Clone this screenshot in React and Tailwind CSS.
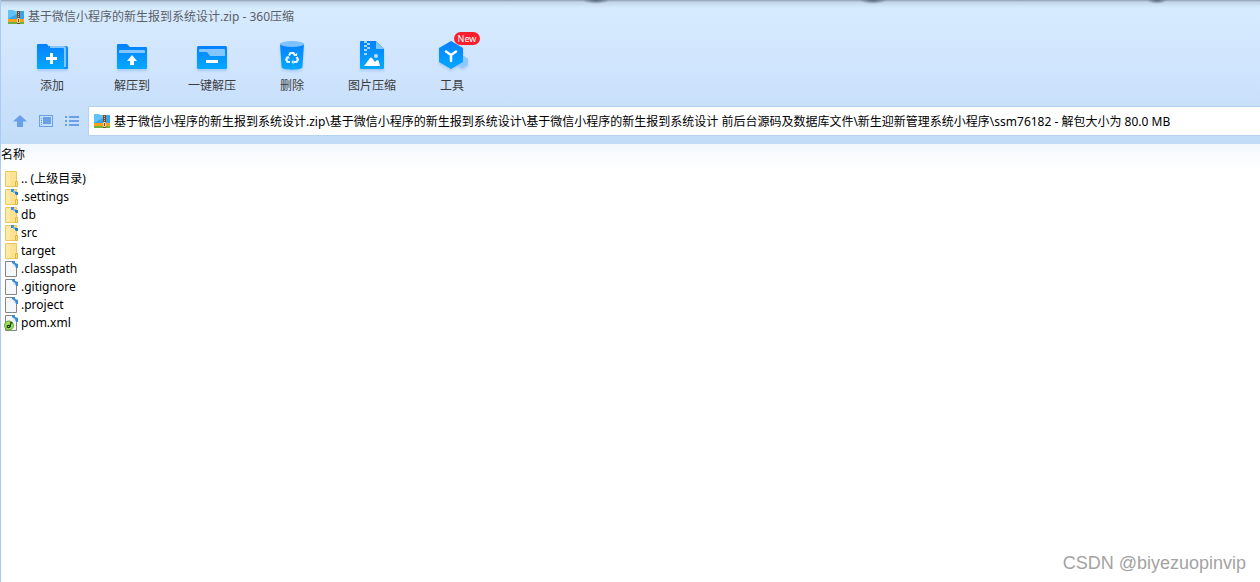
import React, { useState } from 'react';

const ADDRESS = '基于微信小程序的新生报到系统设计.zip\\基于微信小程序的新生报到系统设计\\基于微信小程序的新生报到系统设计 前后台源码及数据库文件\\新生迎新管理系统小程序\\ssm76182 - 解包大小为 80.0 MB';

const files = [
    { name: '.. (上级目录)', type: 'folder' },
    { name: '.settings', type: 'folder', packed: true },
    { name: 'db', type: 'folder', packed: true },
    { name: 'src', type: 'folder', packed: true },
    { name: 'target', type: 'folder' },
    { name: '.classpath', type: 'file', packed: true },
    { name: '.gitignore', type: 'file', packed: true },
    { name: '.project', type: 'file', packed: true },
    { name: 'pom.xml', type: 'xml', packed: true },
];

const ToolSvg = ({ children }) => (
    <svg viewBox="0 0 32 32" className="h-8 w-8 overflow-visible drop-shadow-[0_2px_1px_rgba(60,130,220,0.25)]" aria-hidden="true">
        {children}
    </svg>
);

const AddIcon = () => (
    <ToolSvg>
        <path d="M13 6h17a2 2 0 0 1 2 2v20a1 1 0 0 1-1 1H13z" fill="#0a8dff" />
        <path d="M14 6h14a2 2 0 0 1 2 2v19h-2V9H14z" fill="#86c6ff" />
        <path d="M2 4h9l3 4h13a1 1 0 0 1 1 1v20H2a1 1 0 0 1-1-1V5a1 1 0 0 1 1-1z" fill="url(#toolBlue)" />
        <path d="M14 13h3v4h4v3h-4v4h-3v-4h-4v-3h4z" fill="#fff" />
    </ToolSvg>
);

const ExtractIcon = () => (
    <ToolSvg>
        <path d="M2 4h9l3 3h16a1 1 0 0 1 1 1v20a1 1 0 0 1-1 1H2a1 1 0 0 1-1-1V5a1 1 0 0 1 1-1z" fill="url(#toolBlue)" />
        <path d="M4 10h24a1 1 0 0 1 1 1v2H3v-2a1 1 0 0 1 1-1z" fill="#86c6ff" />
        <path d="M16 15l5 6h-3v4h-4v-4h-3z" fill="#fff" />
    </ToolSvg>
);

const OneClickIcon = () => (
    <ToolSvg>
        <rect x="1" y="6" width="30" height="23" rx="1.5" fill="url(#toolBlue)" />
        <path d="M4 9h24a1 1 0 0 1 1 1v6H14l-3-4H3v-2a1 1 0 0 1 1-1z" fill="#86c6ff" />
        <rect x="10" y="20" width="12" height="3" rx="0.5" fill="#fff" />
    </ToolSvg>
);

const DeleteIcon = () => (
    <ToolSvg>
        <path d="M4 4h24l-1.600 23c-.2 3.500-20.600 3.500-20.800 0z" fill="url(#toolBlue)" />
        <ellipse cx="16" cy="4" rx="12" ry="3" fill="#7dc1ff" />
        <g fill="none" stroke="#e8f5ff" strokeWidth="2.200">
            <path d="M13 15.500l1.500-2.500h3l1.500 2.500" />
            <path d="M20.500 17l1.500 2.500-1.500 2.500h-3" />
            <path d="M14 22h-2.500l-1.300-2.500 1.500-2.500" />
        </g>
        <path d="M17.500 15.800l3.500.2.300-3.200zM17.500 19.800v4.400l-2.200-2.200zM9.500 17.300l3-1.300 1.300 3z" fill="#e8f5ff" />
    </ToolSvg>
);

const ImageIcon = () => (
    <ToolSvg>
        <path d="M5 1h15l8 8v19a1 1 0 0 1-1 1H5a1 1 0 0 1-1-1V2a1 1 0 0 1 1-1z" fill="url(#toolBlue)" />
        <path d="M20 1l8 8h-7a1 1 0 0 1-1-1z" fill="#86c6ff" />
        <path d="M8 1h3v2H8zM11 3h3v2h-3zM8 5h3v2H8zM11 7h3v2h-3zM8 9h3v2H8zM8 13h3v2H8z" fill="#a5d5ff" />
        <circle cx="20" cy="16" r="2" fill="#b9deff" />
        <path d="M8 26l6-8q1-1 2 0l3 4 1.500-1.500q1-.8 2 0L24 26z" fill="#fff" />
    </ToolSvg>
);

const ToolsIcon = () => (
    <ToolSvg>
        <path d="M27 15.500l5 3v6l-5 3.500-5-2z" fill="#8ec8ff" />
        <path d="M15 1l12 7v14l-12 7-12-7V8z" fill="url(#toolBlue)" />
        <path d="M10 11.500l5 3.500 5-3.500M15 15v6" fill="none" stroke="#fff" strokeWidth="2.500" strokeLinecap="round" strokeLinejoin="round" />
    </ToolSvg>
);

const tools = [
    { label: '添加', Icon: AddIcon },
    { label: '解压到', Icon: ExtractIcon },
    { label: '一键解压', Icon: OneClickIcon },
    { label: '删除', Icon: DeleteIcon },
    { label: '图片压缩', Icon: ImageIcon },
    { label: '工具', Icon: ToolsIcon, badge: 'New' },
];

const ArchiveIcon = () => (
    <svg viewBox="0 0 16 16" className="h-4 w-4 shrink-0" aria-hidden="true">
        <path d="M0 1h5l1 1h10v9H0z" fill="#35a4ea" />
        <path d="M0 1h5l1 1h3v3L0 10z" fill="#5fc3fa" />
        <path d="M0 10h16v3H0z" fill="#f9a11b" />
        <path d="M0 13h16v2H0z" fill="#6cb33a" />
        <rect x="9" y="2" width="3" height="13" fill="#7a4a28" />
        <path d="M10 3h1v1h-1zM10 5h1v1h-1zM10 7h1v1h-1z" fill="#e0b070" />
        <rect x="9" y="9" width="3" height="5" rx="1" fill="#f5d9a0" />
        <rect x="10" y="10" width="1" height="3" fill="#7a4a28" />
    </svg>
);

// small blue arrow in the corner of entries that live inside the archive
const PackedMark = () => (
    <g>
        <path d="M7 1h3v3H7z" fill="#3f8fd0" />
        <path d="M9 3h3v2H9z" fill="#7bbcec" />
        <path d="M11 4h3v3h-2l-1-1z" fill="#2b7cc4" />
    </g>
);

const FileIcon = ({ type, packed }) => (
    <svg viewBox="0 0 16 18" className="h-[18px] w-4 shrink-0" aria-hidden="true">
        {type === 'folder' && (
            <>
                <path d="M1.500 1.500h11v15h-11z" fill="#fde391" stroke="#edc75a" />
                <path d="M2 2h4v14H2z" fill="#fdeaa8" />
                <path d="M11.500 11.500h2v5h-2z" fill="#fbe08a" stroke="#e3b63e" />
            </>
        )}
        {type !== 'folder' && (
            <>
                <path d="M1.500 1.500h8l3 4v11h-11z" fill="#f5f7f9" stroke="#858585" />
                <path d="M9 2l4 4v1H9z" fill="#dfeaf4" />
                <path d="M8 1h3v2l3 1v4h-2l-1-3-3-2z" fill="#3b8bd0" />
            </>
        )}
        {type === 'folder' && packed && <PackedMark />}
        {type === 'xml' && (
            <>
                <circle cx="5" cy="11.500" r="4.500" fill="#a4dc5c" stroke="#5aa82e" />
                <ellipse cx="4.500" cy="12.500" rx="1.500" ry="1.200" fill="none" stroke="#163a12" strokeWidth="1.200" />
                <path d="M6 13l1-4.500 1.500.5" fill="none" stroke="#163a12" strokeWidth="1.200" />
            </>
        )}
    </svg>
);

const App = () => {
    const [address, setAddress] = useState(ADDRESS);

    return (
        <div className="flex min-h-screen flex-col border-l border-[#a9cbf3] bg-white font-['Noto_Sans','Noto_Sans_CJK_SC',sans-serif] text-xs text-black">
            {/* shared gradient for the toolbar icons */}
            <svg width="0" height="0" className="absolute" aria-hidden="true">
                <linearGradient id="toolBlue" x1="0" y1="0" x2="0" y2="1">
                    <stop offset="0" stopColor="#0580ff" />
                    <stop offset="1" stopColor="#04a9ff" />
                </linearGradient>
            </svg>

            <header className="bg-linear-to-b from-[#d8ecff] via-[#cfe4fd] to-[#c2dcf8]">
                <div className="h-2 bg-[radial-gradient(14px_4px_at_595px_0,#53657a,transparent),radial-gradient(14px_4px_at_872px_0,#53657a,transparent),radial-gradient(10px_4px_at_1156px_0,#53657a,transparent),linear-gradient(#8a9cae,#c2d5e8_25%,transparent)]" />
                <div className="flex h-[18px] items-center gap-1 pl-[7px] text-[#5b6066]">
                    <ArchiveIcon />
                    <h1>基于微信小程序的新生报到系统设计.zip - 360压缩</h1>
                </div>

                <div className="flex pt-3.5 pb-2 pl-[11px]">
                    {tools.map(({ label, Icon, badge }) => (
                        <button key={label} type="button" className="relative flex w-20 flex-col items-center gap-1 text-[#3c3c3c]">
                            <Icon />
                            <span className="leading-5">{label}</span>
                            {badge && (
                                <span className="absolute -top-2 left-[42px] h-[13px] w-[26px] rounded-full bg-[#fb1f2d] text-[9px] leading-[13px] text-white">
                                    {badge}
                                </span>
                            )}
                        </button>
                    ))}
                </div>

                <div className="flex items-center pt-[2px] pb-2 text-[#69a0ea]">
                    <nav className="flex w-[87px] shrink-0 gap-3 pl-3">
                        <button type="button" aria-label="上级目录">
                            <svg viewBox="0 0 14 14" className="h-3.5 w-3.5"><path d="M7 1l7 6.500h-4V13H4V7.500H0z" fill="currentColor" /></svg>
                        </button>
                        <button type="button" aria-label="预览">
                            <svg viewBox="0 0 14 14" className="h-3.5 w-3.5">
                                <rect x="0.500" y="1.500" width="13" height="11" fill="none" stroke="currentColor" />
                                <path d="M2 4h1v1H2zM2 6h1v1H2zM2 8h1v1H2zM4 3h8v7H4zM2 10h1v1H2z" fill="currentColor" />
                            </svg>
                        </button>
                        <button type="button" aria-label="列表">
                            <svg viewBox="0 0 14 14" className="h-3.5 w-3.5">
                                <path d="M0 2h2v2H0zM4 2h10v2H4zM0 6h2v2H0zM4 6h10v2H4zM0 10h2v2H0zM4 10h10v2H4z" fill="currentColor" />
                            </svg>
                        </button>
                    </nav>
                    <label className="flex h-[30px] flex-1 items-center gap-1 border border-r-0 border-[#b5d2f1] bg-white pl-[5px] text-black">
                        <ArchiveIcon />
                        <input
                            type="text"
                            aria-label="地址"
                            value={address}
                            onChange={(e) => setAddress(e.target.value)}
                            className="h-full min-w-0 flex-1 outline-none"
                        />
                    </label>
                </div>
            </header>

            <main className="flex-1">
                <table className="w-full text-left">
                    <thead>
                        <tr className="h-[26px] bg-linear-to-b from-[#f2f8fe] to-white">
                            <th className="p-0 pb-1 font-normal">名称</th>
                        </tr>
                    </thead>
                    <tbody>
                        {files.map((file) => (
                            <tr key={file.name} className="h-[18px]">
                                <td className="p-0">
                                    <div className="flex items-center gap-px pl-[3px] leading-[18px]">
                                        <FileIcon type={file.type} packed={file.packed} />
                                        <span>{file.name}</span>
                                    </div>
                                </td>
                            </tr>
                        ))}
                    </tbody>
                </table>
            </main>

            <footer className="flex justify-end pr-3.5 pb-[7px] font-['Liberation_Sans',sans-serif] text-lg leading-6 text-[#a3a3a3]">
                CSDN @biyezuopinvip
            </footer>
        </div>
    );
};

export default App;
